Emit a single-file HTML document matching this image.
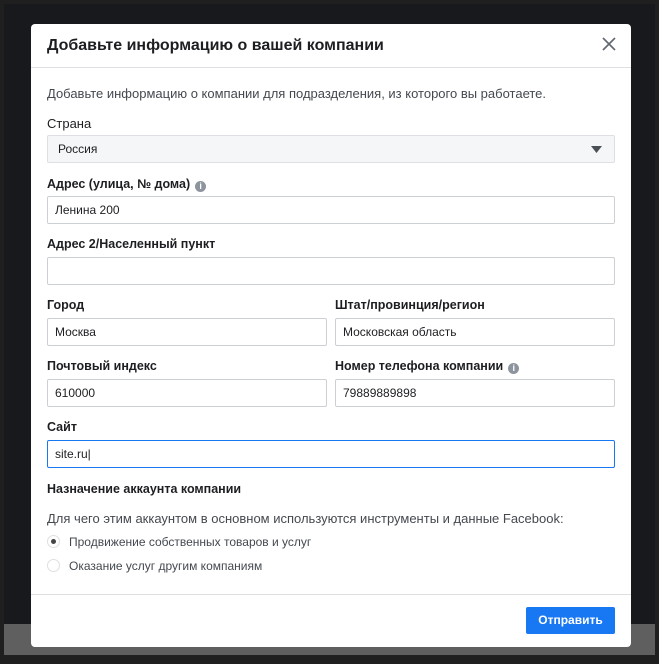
<!DOCTYPE html>
<html><head><meta charset="utf-8"><style>
*{box-sizing:border-box;margin:0;padding:0}
body{width:659px;height:664px;background:#1f1f1f;font-family:"Liberation Sans",Arial,sans-serif;position:relative;overflow:hidden;color:#1c1e21}
.bg{position:absolute;left:4px;top:4px;width:651px;height:651px;background:#17191c}
.band{position:absolute;left:4px;top:624px;width:651px;height:31px;background:#5f5f5f}
.modal{position:absolute;left:31px;top:24px;width:600px;height:623px;background:#fff;border-radius:4px}
.hd{height:44px;border-bottom:1px solid #dddfe2;position:relative}
.hd h1{position:absolute;left:16px;top:13px;font-size:16px;font-weight:bold;color:#1c1e21}
.x{position:absolute;right:14px;top:12px;width:16px;height:16px}
.t{position:absolute;font-size:12px;color:#444950}
.l{position:absolute;font-size:12.5px;font-weight:bold;color:#1c1e21}
.in{position:absolute;height:28px;border:1px solid #ccd0d5;border-radius:2px;background:#fff;font-size:12px;padding-left:7px;line-height:26px;color:#1c1e21}
.info{display:inline-block;width:11px;height:11px;border-radius:50%;background:#8d949e;color:#fff;font-size:9px;text-align:center;line-height:11px;vertical-align:-1px;margin-left:5px;font-weight:bold}
.r{position:absolute;width:13px;height:13px;border-radius:50%;border:1px solid #dddfe2;background:#fff}
.ft{position:absolute;left:0;top:570px;width:600px;border-top:1px solid #dddfe2}
.btn{position:absolute;left:495px;top:583px;width:89px;height:27px;background:#1877f2;border-radius:2px;color:#fff;font-weight:bold;font-size:12px;text-align:center;line-height:27px}
</style></head><body>
<div class="bg"></div><div class="band"></div>
<div class="modal">
<div class="hd"><h1>Добавьте информацию о вашей компании</h1>
<svg class="x" viewBox="0 0 16 16"><path d="M2 2L14 14M14 2L2 14" stroke="#606770" stroke-width="1.6"/></svg></div>
<div class="t" style="left:16px;top:62px;font-size:13px">Добавьте информацию о компании для подразделения, из которого вы работаете.</div>
<div class="l" style="left:16px;top:92px;font-weight:normal;font-size:13px">Страна</div>
<div class="in" style="left:16px;top:111px;width:568px;background:#f5f6f7;border-color:#dddfe2;padding-left:10px">Россия
<svg style="position:absolute;right:12px;top:10px" width="11" height="7" viewBox="0 0 11 7"><path d="M0 0H11L5.5 7Z" fill="#4b4f56"/></svg></div>
<div class="l" style="left:16px;top:153px">Адрес (улица, № дома)<span class="info">i</span></div>
<div class="in" style="left:16px;top:172px;width:568px">Ленина 200</div>
<div class="l" style="left:16px;top:213px">Адрес 2/Населенный пункт</div>
<div class="in" style="left:16px;top:233px;width:568px"></div>
<div class="l" style="left:16px;top:274px">Город</div>
<div class="in" style="left:16px;top:294px;width:280px">Москва</div>
<div class="l" style="left:304px;top:274px">Штат/провинция/регион</div>
<div class="in" style="left:304px;top:294px;width:280px">Московская область</div>
<div class="l" style="left:16px;top:335px">Почтовый индекс</div>
<div class="in" style="left:16px;top:355px;width:280px">610000</div>
<div class="l" style="left:304px;top:335px">Номер телефона компании<span class="info">i</span></div>
<div class="in" style="left:304px;top:355px;width:280px">79889889898</div>
<div class="l" style="left:16px;top:396px">Сайт</div>
<div class="in" style="left:16px;top:416px;width:568px;border-color:#1877f2">site.ru|</div>
<div class="l" style="left:16px;top:458px">Назначение аккаунта компании</div>
<div class="t" style="left:16px;top:487px;font-size:13px">Для чего этим аккаунтом в основном используются инструменты и данные Facebook:</div>
<div class="r" style="left:16px;top:511px"><div style="width:5px;height:5px;border-radius:50%;background:#444;margin:3px"></div></div>
<div class="t" style="left:38px;top:511px">Продвижение собственных товаров и услуг</div>
<div class="r" style="left:16px;top:535px"></div>
<div class="t" style="left:38px;top:535px">Оказание услуг другим компаниям</div>
<div class="ft"></div>
<div class="btn">Отправить</div>
</div>
</body></html>
